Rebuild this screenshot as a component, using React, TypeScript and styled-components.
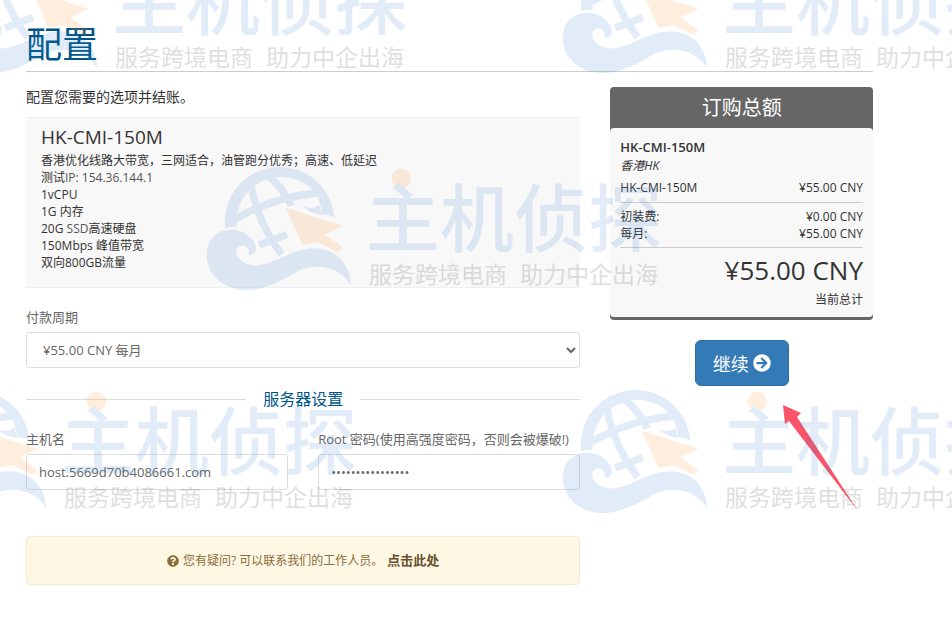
import React from "react";
import styled, { createGlobalStyle } from "styled-components";
import { FaArrowCircleRight, FaQuestionCircle } from "react-icons/fa";

const GlobalStyle = createGlobalStyle`
  *, *::before, *::after { box-sizing: border-box; }
  body {
    margin: 0;
    background: #fff;
    color: #333;
    font: 12px/17px "Open Sans", "Noto Sans CJK SC", sans-serif;
  }
  h1, h2, h3, p, ul, dl, dd { margin: 0; padding: 0; font-weight: 400; }
  button, input, select { font-family: inherit; }
`;

const Page = styled.main`
  position: relative;
  min-height: 100vh;
  overflow: hidden;
  padding: 25px 79px 33px 26px;
`;

const Title = styled.h1`
  padding-bottom: 6px;
  border-bottom: 1px solid #ccc;
  color: #058;
  font-size: 36px;
  font-weight: 400;
  line-height: 40px;
`;

const Columns = styled.div`
  display: grid;
  grid-template-columns: minmax(0, 2.11fr) minmax(0, 1fr);
  gap: 30px;
  align-items: start;
  padding-top: 15px;
`;

const Intro = styled.p`
  margin-bottom: 10px;
  font-size: 14px;
  line-height: 20px;
`;

const ProductInfo = styled.section`
  margin-bottom: 20px;
  padding: 9px 15px 16px;
  border: solid #efefef;
  border-width: 1px 0;
  background: #f8f8f8;
`;

const ProductTitle = styled.h2`
  margin-bottom: 5px;
  font-size: 19px;
  line-height: 20px;
`;

const FeatureList = styled.ul`
  list-style: none;
`;

const Feature = styled.li`
  line-height: 17px;
`;

const Muted = styled.span`
  color: #555;
`;

const Field = styled.div`
  min-width: 0;
`;

const Label = styled.label`
  display: block;
  margin-bottom: 5px;
  color: #666;
  font-size: 13px;
  line-height: 19px;
  white-space: nowrap;
`;

const TextInput = styled.input`
  display: block;
  width: 100%;
  height: 36px;
  padding: 6px 12px;
  border: 1px solid #ddd;
  border-radius: 3px;
  background: #fff;
  color: #666;
  font-size: 13px;
`;

const Select = styled.select`
  display: block;
  width: 100%;
  height: 36px;
  padding: 6px 0 6px 12px;
  border: 1px solid #ddd;
  border-radius: 3px;
  background: #fff;
  color: #666;
  font-size: 13px;
`;

const SectionHeading = styled.h2`
  display: flex;
  align-items: center;
  gap: 17px;
  margin: 20px 0;
  color: #058;
  font-size: 16px;
  line-height: 22px;

  &::before,
  &::after {
    content: "";
    flex: 1;
    border-top: 1px solid #ddd;
  }
`;

const FieldRow = styled.div`
  display: grid;
  grid-template-columns: 1fr 1fr;
  gap: 30px;
  margin-bottom: 46px;
`;

const HelpNotice = styled.p`
  display: flex;
  align-items: center;
  justify-content: center;
  gap: 4px;
  padding: 15px;
  border: 1px solid #f5ebcc;
  border-radius: 4px;
  background: #fdf7e3;
  color: #8a6d3b;
`;

const HelpLink = styled.a`
  color: #66512c;
  font-size: 13px;
  font-weight: 700;
  text-decoration: none;
`;

const Summary = styled.section`
  border-bottom: 3px solid #666;
  border-radius: 4px;
  background: #666;
`;

const SummaryTitle = styled.h2`
  color: #fff;
  font-size: 20px;
  line-height: 41px;
  text-align: center;
`;

const SummaryBody = styled.div`
  padding: 10px 10px 5px;
  border-radius: 4px;
  background: #f8f8f8;
`;

const SummaryProduct = styled.h3`
  font-size: 13px;
  font-weight: 600;
  line-height: 19px;
`;

const SummaryGroup = styled.p`
  margin-bottom: 5px;
  font-style: italic;
  line-height: 17px;
`;

const Lines = styled.dl<{ $ruled?: boolean }>`
  padding: ${(p) => (p.$ruled ? "5px 0" : "0 0 6px")};
  border: solid #ccc;
  border-width: ${(p) => (p.$ruled ? "1px 0" : "0")};
`;

const Line = styled.div`
  display: flex;
  justify-content: space-between;
  line-height: 17px;
`;

const Total = styled.div`
  padding-top: 4px;
  text-align: right;
`;

const Amount = styled.strong`
  display: block;
  font-size: 26px;
  font-weight: 400;
  line-height: 36px;
`;

const TotalCaption = styled.span`
  display: block;
  line-height: 24px;
`;

const Actions = styled.div`
  display: flex;
  justify-content: center;
  padding-top: 20px;
`;

const ContinueButton = styled.button`
  display: flex;
  align-items: center;
  gap: 4px;
  height: 46px;
  padding: 0 17px;
  border: 1px solid #2e6da4;
  border-radius: 6px;
  background: #337ab7;
  color: #fff;
  font-size: 18px;
  cursor: pointer;
`;

const Pointer = styled.svg`
  position: absolute;
  left: 782px;
  top: 404px;
  pointer-events: none;
`;

const WatermarkLayer = styled.div`
  position: absolute;
  inset: 0;
  overflow: hidden;
  opacity: 0.14;
  pointer-events: none;
`;

const Mark = styled.svg<{ $x: number; $y: number }>`
  position: absolute;
  left: ${(p) => p.$x}px;
  top: ${(p) => p.$y}px;
  font-family: "Noto Sans CJK SC", sans-serif;
`;

const marks = [
  { x: -54, y: -62 },
  { x: 556, y: -62 },
  { x: 200, y: 155 },
  { x: -105, y: 378 },
  { x: 556, y: 378 },
];

function Watermark({ x, y }: { x: number; y: number }) {
  return (
    <Mark $x={x} $y={y} width="470" height="150" viewBox="0 0 470 150" aria-hidden="true">
      <g transform="scale(0.3333)">
        <g fill="#3080d0">
          <path d="M75 214A164 164 0 1 1 403 187Q385 178 366 178Q364 145 345 112A134 134 0 0 0 110 190V216Q92 214 75 220Z" />
          <path d="M85 225C130 219 168 255 168 280C168 296 155 300 147 300C150 277 130 263 114 277C98 294 120 328 160 331C220 335 270 280 345 280C410 282 452 330 453 390C425 342 360 321 300 345C240 380 190 408 130 405C60 400 20 350 20 300C20 260 45 228 85 225Z" />
          <path d="M304 147Q330 170 358 150L366 180L340 174Q318 165 304 147Z" />
        </g>
        <g fill="none" stroke="#3080d0" strokeWidth="22">
          <path d="M106 192Q215 128 350 114" />
          <path d="M153 88C163 160 200 240 245 298" />
          <path d="M207 64Q250 100 274 152" />
          <path d="M177 270L261 238" />
        </g>
        <path fill="#ff8e1c" d="M257 158L427 212L374 239L427 275L414 292L354 262L308 269Z" />
        <circle cx="604" cy="70" r="29" fill="#ff8e1c" />
      </g>
      <text x="166" y="91" fontSize="74" fontWeight="500" fill="#3080d0">主机侦探</text>
      <text x="169" y="128" fontSize="23" fill="#222">服务跨境电商</text>
      <text x="320" y="128" fontSize="23" fill="#222">助力中企出海</text>
    </Mark>
  );
}

export default function App() {
  return (
    <>
      <GlobalStyle />
      <Page>
        <Title>配置</Title>
        <Columns>
          <form id="configure">
            <Intro>配置您需要的选项并结账。</Intro>
            <ProductInfo>
              <ProductTitle>HK-CMI-150M</ProductTitle>
              <FeatureList>
                <Feature>香港优化线路大带宽，三网适合，油管跑分优秀；高速、低延迟</Feature>
                <Feature>测试<Muted>IP: 154.36.144.1</Muted></Feature>
                <Feature>1vCPU</Feature>
                <Feature>1G 内存</Feature>
                <Feature>20G <Muted>SSD</Muted>高速硬盘</Feature>
                <Feature>150Mbps 峰值带宽</Feature>
                <Feature>双向800GB流量</Feature>
              </FeatureList>
            </ProductInfo>
            <Field>
              <Label htmlFor="cycle">付款周期</Label>
              <Select id="cycle" defaultValue="monthly">
                <option value="monthly">¥55.00 CNY 每月</option>
              </Select>
            </Field>
            <SectionHeading>服务器设置</SectionHeading>
            <FieldRow>
              <Field>
                <Label htmlFor="hostname">主机名</Label>
                <TextInput id="hostname" type="text" defaultValue="host.5669d70b4086661.com" />
              </Field>
              <Field>
                <Label htmlFor="rootpw">Root 密码(使用高强度密码，否则会被爆破!)</Label>
                <TextInput id="rootpw" type="password" autoComplete="off" defaultValue="0000000000000000" />
              </Field>
            </FieldRow>
            <HelpNotice>
              <FaQuestionCircle aria-hidden="true" />
              <span>您有疑问? 可以联系我们的工作人员。</span>
              <HelpLink href="#contact">点击此处</HelpLink>
            </HelpNotice>
          </form>
          <aside>
            <Summary>
              <SummaryTitle>订购总额</SummaryTitle>
              <SummaryBody>
                <SummaryProduct>HK-CMI-150M</SummaryProduct>
                <SummaryGroup>香港HK</SummaryGroup>
                <Lines>
                  <Line><dt>HK-CMI-150M</dt><dd>¥55.00 CNY</dd></Line>
                </Lines>
                <Lines $ruled>
                  <Line><dt>初装费:</dt><dd>¥0.00 CNY</dd></Line>
                  <Line><dt>每月:</dt><dd>¥55.00 CNY</dd></Line>
                </Lines>
                <Total>
                  <Amount>¥55.00 CNY</Amount>
                  <TotalCaption>当前总计</TotalCaption>
                </Total>
              </SummaryBody>
            </Summary>
            <Actions>
              <ContinueButton type="submit" form="configure">
                继续
                <FaArrowCircleRight aria-hidden="true" />
              </ContinueButton>
            </Actions>
          </aside>
        </Columns>
        <Pointer width="78" height="108" viewBox="0 0 78 108" aria-hidden="true">
          <path d="M1 1L19 9L15 13L76 107L7 17L3 20Z" fill="#fb5468" />
        </Pointer>
        <WatermarkLayer>
          {marks.map((m) => (
            <Watermark key={`${m.x},${m.y}`} x={m.x} y={m.y} />
          ))}
        </WatermarkLayer>
      </Page>
    </>
  );
}
